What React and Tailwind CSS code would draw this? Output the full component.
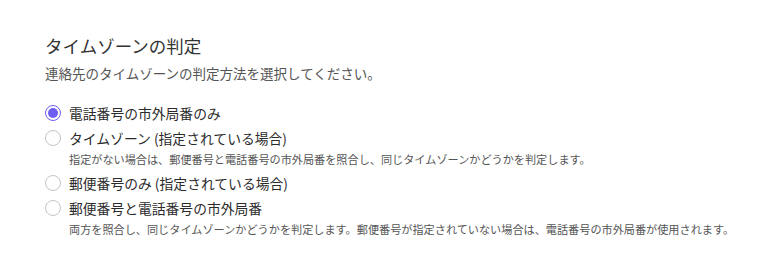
import React, { useState } from "react";

const options = [
  { id: "phone", label: "電話番号の市外局番のみ" },
  {
    id: "tz",
    label: "タイムゾーン (指定されている場合)",
    desc: "指定がない場合は、郵便番号と電話番号の市外局番を照合し、同じタイムゾーンかどうかを判定します。",
  },
  { id: "zip", label: "郵便番号のみ (指定されている場合)" },
  {
    id: "both",
    label: "郵便番号と電話番号の市外局番",
    desc: "両方を照合し、同じタイムゾーンかどうかを判定します。郵便番号が指定されていない場合は、電話番号の市外局番が使用されます。",
  },
];

const Radio = ({ checked }) => (
  <span
    className={`w-[16px] h-[16px] min-w-[16px] rounded-full flex items-center justify-center bg-white ${
      checked ? "border-[1.5px] border-[#6d5ef2]" : "border border-[#c4c4c4]"
    }`}
  >
    {checked && <span className="w-[10px] h-[10px] rounded-full bg-[#6d5ef2]" />}
  </span>
);

const App = () => {
  const [selected, setSelected] = useState("phone");

  return (
    <div
      className="w-[759px] h-[270px] bg-white px-[45px] pt-[34px] text-[#333]"
      style={{ fontFamily: '"Noto Sans CJK JP", "Noto Sans", sans-serif' }}
    >
      {/* Header */}
      <h2 className="text-[17.5px] leading-[24px]">タイムゾーンの判定</h2>
      <p className="mt-[5px] text-[13.5px] leading-[20px] text-[#555]">
        連絡先のタイムゾーンの判定方法を選択してください。
      </p>

      {/* Options */}
      <div className="mt-[20px] flex flex-col">
        {options.map((opt, i) => (
          <div key={opt.id} className={i === 0 ? "" : i === 2 ? "mt-[6px]" : "mt-[5px]"}>
            <label
              className="flex items-center gap-[8px] cursor-pointer"
              onClick={() => setSelected(opt.id)}
            >
              <Radio checked={selected === opt.id} />
              <span className="text-[13.8px] leading-[20px] text-[#2b2b2b]">{opt.label}</span>
            </label>
            {opt.desc && (
              <p className="mt-[3px] pl-[24px] text-[11.15px] leading-[16px] text-[#555] whitespace-nowrap">
                {opt.desc}
              </p>
            )}
          </div>
        ))}
      </div>
    </div>
  );
};

export default App;
